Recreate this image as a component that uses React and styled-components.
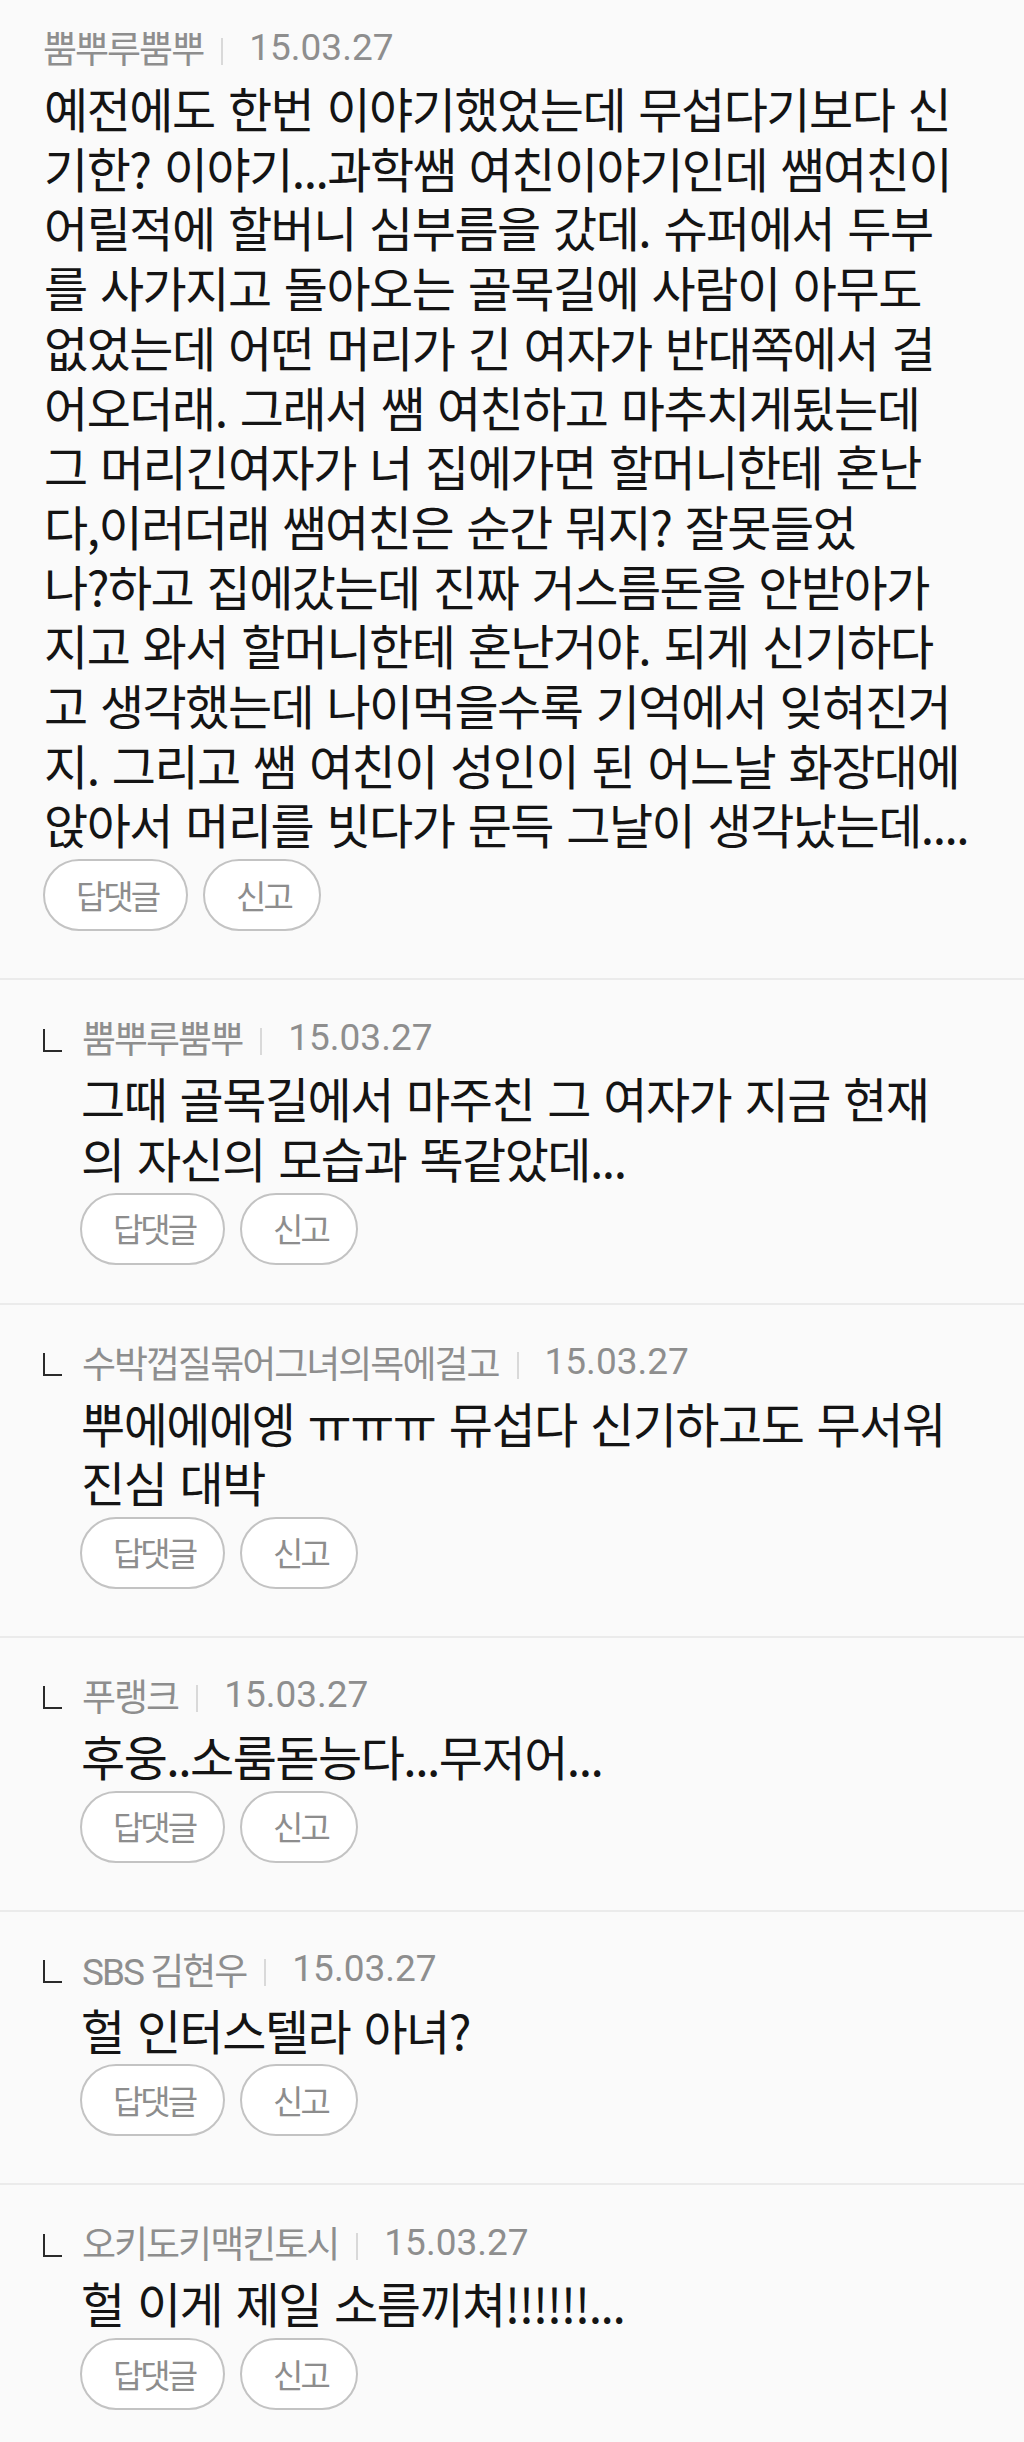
import React from "react";
import styled, { createGlobalStyle } from "styled-components";

const GlobalStyle = createGlobalStyle`
  html, body {
    margin: 0;
    padding: 0;
    background: #fafafa;
  }
  body {
    font-family: "Noto Sans CJK KR", "Noto Sans", sans-serif;
  }
`;

const Page = styled.main`
  display: flex;
  flex-direction: column;
  background: #fafafa;
`;

const Comment = styled.section`
  display: flex;
  flex-direction: column;
  align-items: flex-start;
  padding: ${(p) => (p.$first ? "25px" : "35px")} 0 ${(p) => p.$bottom}px 43px;
  border-bottom: ${(p) => (p.$last ? "none" : "2px solid #ebebeb")};
`;

const Meta = styled.div`
  display: flex;
  align-items: center;
  height: 44px;
`;

// the little "ㄴ" hook in front of a reply
const ReplyMark = styled.span`
  box-sizing: border-box;
  width: 19px;
  height: 23px;
  margin: 6px 20px 0 0;
  border-left: 2px solid #2a2a2a;
  border-bottom: 2px solid #2a2a2a;
`;

const Author = styled.span`
  font-family: "Roboto", "Noto Sans CJK KR", sans-serif;
  font-size: 37px;
  letter-spacing: -2px;
  color: #8e8e8e;
  white-space: nowrap;
`;

const Divider = styled.span`
  width: 2px;
  height: 27px;
  margin: 8px 26px 0 18px;
  background: #d9d9d9;
`;

const DateText = styled.span`
  font-family: "Roboto", sans-serif;
  font-size: 37px;
  color: #8e8e8e;
`;

const Body = styled.p`
  margin: 9px 0 0 ${(p) => (p.$reply ? 38 : 1)}px;
  font-size: 48px;
  line-height: 59.7px;
  letter-spacing: -1.5px;
  word-spacing: 4px;
  color: #141414;
  white-space: nowrap;
`;

const Actions = styled.div`
  display: flex;
  gap: 15px;
  margin: 5px 0 0 ${(p) => (p.$reply ? 37 : 0)}px;
`;

const ActionButton = styled.button`
  height: 72px;
  padding: 0 28px 0 31px;
  border: 2px solid #c3c3c3;
  border-radius: 36px;
  background: #ffffff;
  color: #8d8d8d;
  font-family: "Noto Sans CJK KR", sans-serif;
  font-size: 33px;
  letter-spacing: -3px;
  line-height: 1;
  cursor: pointer;
`;

const comments = [
  {
    name: "뿜뿌루뿜뿌",
    date: "15.03.27",
    bottom: 47,
    lines: [
      "예전에도 한번 이야기했었는데 무섭다기보다 신",
      "기한? 이야기...과학쌤 여친이야기인데 쌤여친이",
      "어릴적에 할버니 심부름을 갔데. 슈퍼에서 두부",
      "를 사가지고 돌아오는 골목길에 사람이 아무도",
      "없었는데 어떤 머리가 긴 여자가 반대쪽에서 걸",
      "어오더래. 그래서 쌤 여친하고 마추치게됬는데",
      "그 머리긴여자가 너 집에가면 할머니한테 혼난",
      "다,이러더래 쌤여친은 순간 뭐지? 잘못들었",
      "나?하고 집에갔는데 진짜 거스름돈을 안받아가",
      "지고 와서 할머니한테 혼난거야. 되게 신기하다",
      "고 생각했는데 나이먹을수록 기억에서 잊혀진거",
      "지. 그리고 쌤 여친이 성인이 된 어느날 화장대에",
      "앉아서 머리를 빗다가 문득 그날이 생각났는데....",
    ],
  },
  {
    name: "뿜뿌루뿜뿌",
    date: "15.03.27",
    reply: true,
    bottom: 38,
    lines: ["그때 골목길에서 마주친 그 여자가 지금 현재", "의 자신의 모습과 똑같았데..."],
  },
  {
    name: "수박껍질묶어그녀의목에걸고",
    date: "15.03.27",
    reply: true,
    bottom: 47,
    lines: ["뿌에에에엥 ㅠㅠㅠ 뮤섭다 신기하고도 무서워", "진심 대박"],
  },
  {
    name: "푸랭크",
    date: "15.03.27",
    reply: true,
    bottom: 47,
    lines: ["후웅..소룸돋능다...무저어..."],
  },
  {
    name: "SBS 김현우",
    date: "15.03.27",
    reply: true,
    bottom: 47,
    lines: ["헐 인터스텔라 아녀?"],
  },
  {
    name: "오키도키맥킨토시",
    date: "15.03.27",
    reply: true,
    bottom: 40,
    lines: ["헐 이게 제일 소름끼쳐!!!!!!..."],
  },
];

const App = () => {
  return (
    <>
      <GlobalStyle />
      <Page>
        {comments.map((c, i) => (
          <Comment
            key={i}
            $first={i === 0}
            $last={i === comments.length - 1}
            $bottom={c.bottom}
          >
            <Meta>
              {c.reply && <ReplyMark aria-label="ㄴ" />}
              <Author>{c.name}</Author>
              <Divider />
              <DateText>{c.date}</DateText>
            </Meta>
            <Body $reply={c.reply}>
              {c.lines.map((line, j) => (
                <React.Fragment key={j}>
                  {j > 0 && <br />}
                  {line}
                </React.Fragment>
              ))}
            </Body>
            <Actions $reply={c.reply}>
              <ActionButton>답댓글</ActionButton>
              <ActionButton>신고</ActionButton>
            </Actions>
          </Comment>
        ))}
      </Page>
    </>
  );
};

export default App;
